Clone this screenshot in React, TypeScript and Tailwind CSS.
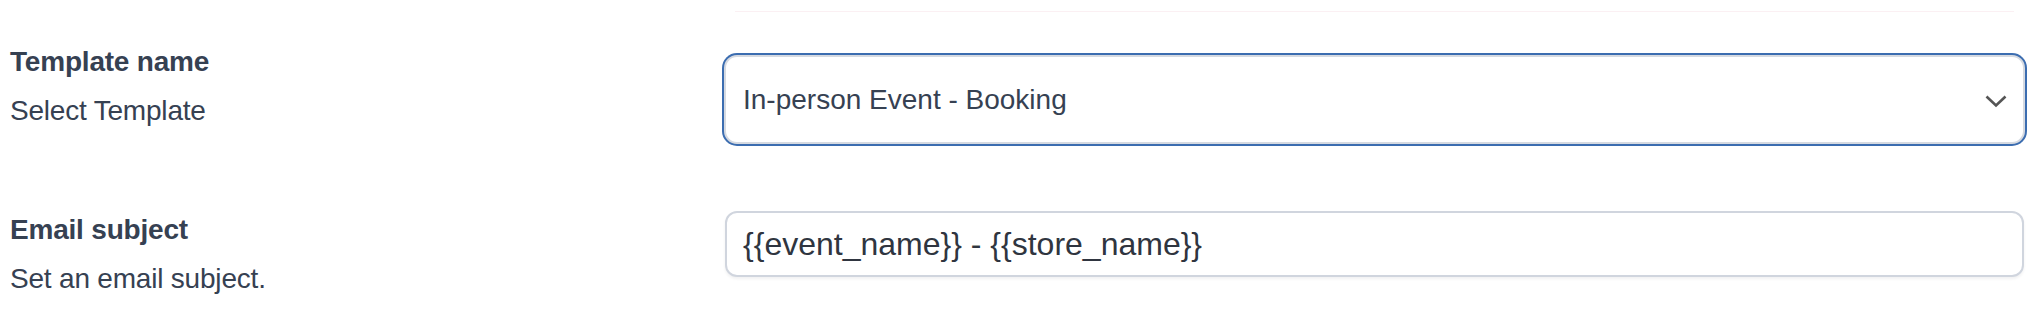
import React from "react";

export default function App() {
  const font = { fontFamily: '"Liberation Sans", Arial, Helvetica, sans-serif' };
  return (
    <div className="w-full h-[316px] bg-white text-[#364152] overflow-hidden" style={font}>
      <div className="flex pl-[10px] pr-[13px]">
        <div className="w-[714px] shrink-0" />
        <div className="flex-1 pt-[11px] px-[11px]">
          <div className="h-px bg-[#fbf0f3]" />
        </div>
      </div>

      {/* Row 1 */}
      <div className="flex pl-[10px] pr-[13px] mt-[35px]">
        <div className="w-[714px] shrink-0">
          <div className="text-[28px] leading-[30px] font-bold tracking-[-0.2px]">Template name</div>
          <div className="text-[28px] leading-[30px] mt-[19px] tracking-[-0.2px]">Select Template</div>
        </div>
        <div className="flex-1 pt-[8px]">
          <div className="relative h-[89px] rounded-[13px] border-2 border-[#d6dae1] ring-2 ring-[#3c6db0] bg-white flex items-center pl-[17px] pr-[16px]">
            <span className="text-[28px] leading-[32px] text-[#364152]">In-person Event - Booking</span>
            <svg
              className="ml-auto mt-[3px]"
              width="22"
              height="13"
              viewBox="0 0 22 13"
              fill="none"
            >
              <polyline points="1.5,1.5 11,10.5 20.5,1.5" stroke="#555555" strokeWidth="2.6" />
            </svg>
          </div>
        </div>
      </div>

      {/* Row 2 */}
      <div className="flex pl-[10px] pr-[14px] mt-[67px]">
        <div className="w-[715px] shrink-0 pt-[4px]">
          <div className="text-[28px] leading-[30px] font-bold tracking-[-0.2px]">Email subject</div>
          <div className="text-[28px] leading-[30px] mt-[19px] tracking-[-0.2px]">Set an email subject.</div>
        </div>
        <div className="flex-1">
          <div className="h-[66px] rounded-[12px] border-2 border-[#d0d5de] bg-white shadow-[0_2px_3px_rgba(16,24,40,0.06)] flex items-center pl-[16px]">
            <span className="text-[32px] leading-[36px] text-[#2f3540]">{"{{event_name}} - {{store_name}}"}</span>
          </div>
        </div>
      </div>
    </div>
  );
}
